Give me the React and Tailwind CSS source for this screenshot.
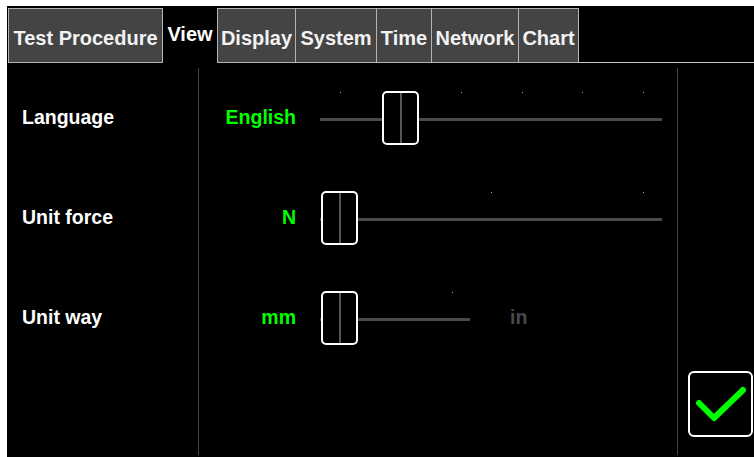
import React from "react";

function Slider({ width, thumbLeft, ticks }) {
  return (
    <div className="relative h-[54px] shrink-0" style={{ width }}>
      {ticks.map((t, i) => (
        <div key={i} className="absolute top-px w-px h-px bg-[#a0a0a0]" style={{ left: t }} />
      ))}
      <div className="absolute left-0 right-0 top-[27px] h-[3px] bg-[#4a4a4a]" />
      <div
        className="absolute top-0 w-[37px] h-[54px] border-2 border-white rounded-[5px] bg-black"
        style={{ left: thumbLeft }}
      >
        <div className="absolute top-0 bottom-0 left-[15.5px] w-[2px] bg-[#555]" />
      </div>
    </div>
  );
}

export default function App() {
  const tabBase =
    "flex justify-center h-[55px] text-[20px] font-bold text-[#f2f2f2] whitespace-nowrap";
  const tabBox = "items-center pt-[5px] bg-[#444] border-[#b4b4b4]";
  return (
    <div className="w-[754px] h-[457px] bg-white pt-[6px] pl-[7px] font-['Liberation_Sans',Arial,sans-serif] overflow-hidden">
      <div className="w-full h-full bg-black flex flex-col">
        {/* tabs */}
        <div className="flex h-[57px] items-end pl-px shrink-0">
          <div className={`${tabBase} ${tabBox} w-[155px] border`}>Test Procedure</div>
          <div className={`${tabBase} w-[54px] items-start pt-[11px] bg-black text-white`}>View</div>
          <div className={`${tabBase} ${tabBox} w-[78px] border-l border-t border-b`}>Display</div>
          <div className={`${tabBase} ${tabBox} w-[81px] border-l border-t border-b`}>System</div>
          <div className={`${tabBase} ${tabBox} w-[55px] border-l border-t border-b`}>Time</div>
          <div className={`${tabBase} ${tabBox} w-[87px] border-l border-t border-b`}>Network</div>
          <div className={`${tabBase} ${tabBox} w-[61px] border`}>Chart</div>
          <div className="flex-1 h-px bg-[#c8c8c8]" />
        </div>

        {/* content */}
        <div className="flex flex-1">
          <div className="w-[191px] pt-[5px] flex flex-col">
            {["Language", "Unit force", "Unit way"].map((l) => (
              <div key={l} className="h-[100px] flex items-center pl-[15px] text-[19.5px] font-bold text-white">
                {l}
              </div>
            ))}
          </div>
          <div className="w-px bg-[#444] mt-[5px] mb-[2px]" />
          <div className="w-[478px] pt-[5px] flex flex-col">
            <div className="h-[100px] flex items-center">
              <div className="w-[97px] text-right text-[19.5px] font-bold text-[#00ff00]">English</div>
              <div className="ml-[24px]">
                <Slider width={342} thumbLeft={62} ticks={[20, 80, 141, 202, 262, 323]} />
              </div>
            </div>
            <div className="h-[100px] flex items-center">
              <div className="w-[97px] text-right text-[19.5px] font-bold text-[#00ff00]">N</div>
              <div className="ml-[24px]">
                <Slider width={342} thumbLeft={1} ticks={[19, 171, 323]} />
              </div>
            </div>
            <div className="h-[100px] flex items-center">
              <div className="w-[97px] text-right text-[19.5px] font-bold text-[#00ff00]">mm</div>
              <div className="ml-[24px]">
                <Slider width={150} thumbLeft={1} ticks={[19, 132]} />
              </div>
              <div className="ml-[40px] text-[19.5px] font-bold text-[#4a4a4a]">in</div>
            </div>
          </div>
          <div className="w-px bg-[#444] mt-[5px] mb-[2px]" />
          <div className="flex-1 flex flex-col justify-end pb-[20px] pl-[10px]">
            <div className="w-[65px] h-[66px] border-2 border-white rounded-[6px] bg-black">
              <svg width="61" height="62" viewBox="0 0 61 62">
                <polyline
                  points="9,30 24,45 53,17"
                  fill="none"
                  stroke="#00ff00"
                  strokeWidth="6"
                  strokeLinecap="round"
                  strokeLinejoin="round"
                />
              </svg>
            </div>
          </div>
        </div>
      </div>
    </div>
  );
}
